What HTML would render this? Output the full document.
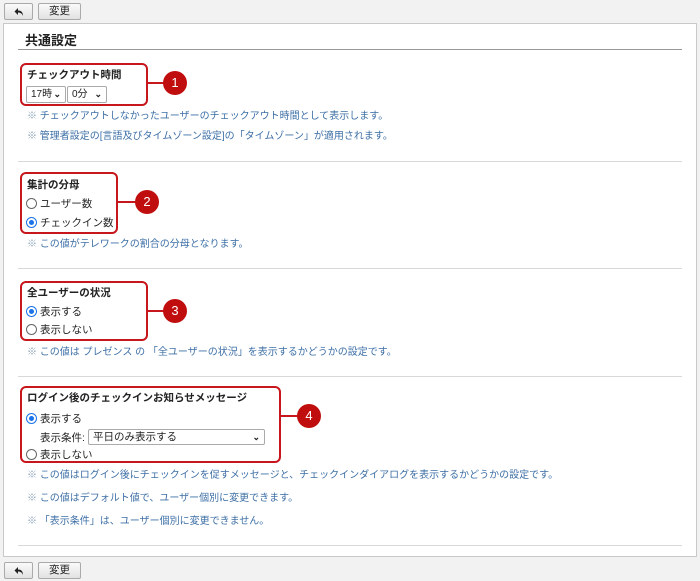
<!DOCTYPE html>
<html><head><meta charset="utf-8"><style>
*{margin:0;padding:0;box-sizing:border-box}
body{width:700px;height:581px;background:#f2f2f2;font-family:"Liberation Sans","Noto Sans CJK JP",sans-serif;font-size:10.5px;color:#222;position:relative;overflow:hidden}
.a{position:absolute;white-space:nowrap}
.btn{position:absolute;height:17px;border:1px solid #aaa;border-radius:2px;background:linear-gradient(#fafafa,#e2e2e2);font-size:10.5px;text-align:center;line-height:15px}
.btn svg{margin-top:3px}
.panel{position:absolute;left:3px;top:23px;width:694px;height:534px;background:#fff;border:1px solid #c8c8c8}
.box{position:absolute;border:2px solid #c8161d;border-radius:6px}
.num{position:absolute;width:24px;height:24px;border-radius:50%;background:#c00d0d;color:#fff;font-size:13px;text-align:center;line-height:24px}
.line{position:absolute;height:2px;background:#c8161d}
.sep{position:absolute;left:18px;width:664px;height:1px;background:#d8d8d8}
.note{position:absolute;left:27px;color:#3d6fa6;white-space:nowrap;font-size:10px}
.note b{color:#8aa0b8;font-weight:normal}
.r{position:absolute;width:11px;height:11px;border:1px solid #666;border-radius:50%;background:#fff}
.r.on{border-color:#1a73e8}
.r.on:after{content:"";position:absolute;left:2px;top:2px;width:5px;height:5px;border-radius:50%;background:#1a73e8}
.sel{position:absolute;height:17px;border:1px solid #aaa;border-radius:2px;background:#fff;font-size:10px;line-height:15px;padding-left:4px}
.sel i{position:absolute;right:4px;top:0;font-style:normal;font-size:9px;font-weight:bold}
.bold{font-weight:bold}
</style></head><body>
<div class="btn" style="left:4px;top:3px;width:29px"><svg width="10" height="10" viewBox="0 0 10 10"><path d="M4 1L0.5 4.5L4 8V5.5C6.5 5.5 8 6.5 9 9C9 5 7 3.5 4 3.5Z" fill="#222"/></svg></div>
<div class="btn" style="left:38px;top:3px;width:43px">変更</div>
<div class="panel"></div>
<div class="a bold" style="left:25px;top:30px;font-size:13px">共通設定</div>
<div class="a" style="left:18px;top:49px;width:664px;height:1px;background:#999"></div>

<div class="box" style="left:20px;top:63px;width:128px;height:43px"></div>
<div class="a bold" style="left:27px;top:67px">チェックアウト時間</div>
<div class="sel" style="left:26px;top:86px;width:40px">17時<i>⌄</i></div>
<div class="sel" style="left:67px;top:86px;width:40px">0分<i>⌄</i></div>
<div class="line" style="left:148px;top:82px;width:16px"></div>
<div class="num" style="left:163px;top:71px">1</div>
<div class="note" style="top:107px"><b>※</b> チェックアウトしなかったユーザーのチェックアウト時間として表示します。</div>
<div class="note" style="top:127px"><b>※</b> 管理者設定の[言語及びタイムゾーン設定]の「タイムゾーン」が適用されます。</div>
<div class="sep" style="top:161px"></div>

<div class="box" style="left:20px;top:172px;width:98px;height:62px"></div>
<div class="a bold" style="left:27px;top:177px">集計の分母</div>
<div class="r" style="left:26px;top:198px"></div><div class="a" style="left:40px;top:196px">ユーザー数</div>
<div class="r on" style="left:26px;top:217px"></div><div class="a" style="left:40px;top:215px">チェックイン数</div>
<div class="line" style="left:118px;top:201px;width:18px"></div>
<div class="num" style="left:135px;top:190px">2</div>
<div class="note" style="top:235px"><b>※</b> この値がテレワークの割合の分母となります。</div>
<div class="sep" style="top:268px"></div>

<div class="box" style="left:20px;top:281px;width:128px;height:60px"></div>
<div class="a bold" style="left:27px;top:285px">全ユーザーの状況</div>
<div class="r on" style="left:26px;top:306px"></div><div class="a" style="left:40px;top:304px">表示する</div>
<div class="r" style="left:26px;top:324px"></div><div class="a" style="left:40px;top:322px">表示しない</div>
<div class="line" style="left:148px;top:310px;width:16px"></div>
<div class="num" style="left:163px;top:299px">3</div>
<div class="note" style="top:343px"><b>※</b> この値は プレゼンス の 「全ユーザーの状況」を表示するかどうかの設定です。</div>
<div class="sep" style="top:376px"></div>

<div class="box" style="left:20px;top:386px;width:261px;height:77px"></div>
<div class="a bold" style="left:27px;top:390px">ログイン後のチェックインお知らせメッセージ</div>
<div class="r on" style="left:26px;top:413px"></div><div class="a" style="left:40px;top:411px">表示する</div>
<div class="a" style="left:40px;top:430px">表示条件:</div>
<div class="sel" style="left:88px;top:429px;width:177px;height:16px;font-size:10.5px;line-height:14px">平日のみ表示する<i>⌄</i></div>
<div class="r" style="left:26px;top:449px"></div><div class="a" style="left:40px;top:447px">表示しない</div>
<div class="line" style="left:281px;top:415px;width:17px"></div>
<div class="num" style="left:297px;top:404px">4</div>
<div class="note" style="top:466px"><b>※</b> この値はログイン後にチェックインを促すメッセージと、チェックインダイアログを表示するかどうかの設定です。</div>
<div class="note" style="top:489px"><b>※</b> この値はデフォルト値で、ユーザー個別に変更できます。</div>
<div class="note" style="top:512px"><b>※</b> 「表示条件」は、ユーザー個別に変更できません。</div>
<div class="sep" style="top:545px"></div>

<div class="btn" style="left:4px;top:562px;width:29px"><svg width="10" height="10" viewBox="0 0 10 10"><path d="M4 1L0.5 4.5L4 8V5.5C6.5 5.5 8 6.5 9 9C9 5 7 3.5 4 3.5Z" fill="#222"/></svg></div>
<div class="btn" style="left:38px;top:562px;width:43px">変更</div>
</body></html>
